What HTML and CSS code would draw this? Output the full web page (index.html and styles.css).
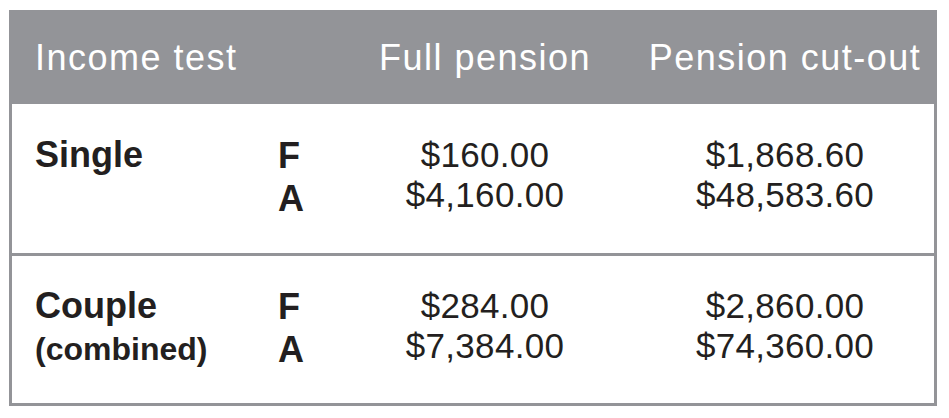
FILE: index.html
```html
<!DOCTYPE html>
<html>
<head>
<meta charset="utf-8">
<link rel="stylesheet" href="styles.css">
</head>
<body>
<div class="table">
  <div class="head">
    <div class="h-label">Income test</div>
    <div class="h-full">Full pension</div>
    <div class="h-cut">Pension cut-out</div>
  </div>
  <div class="row r1">
    <div class="label">Single</div>
    <div class="fa">F<br>A</div>
    <div class="val full">$160.00<br>$4,160.00</div>
    <div class="val cut">$1,868.60<br>$48,583.60</div>
  </div>
  <div class="row r2">
    <div class="label">Couple<br><span class="sub">(combined)</span></div>
    <div class="fa">F<br>A</div>
    <div class="val full">$284.00<br>$7,384.00</div>
    <div class="val cut">$2,860.00<br>$74,360.00</div>
  </div>
</div>
</body>
</html>
```
FILE: styles.css
```css
html, body {
  margin: 0;
  padding: 0;
  background: #ffffff;
}
body {
  padding: 10px 9px;
  font-family: "Liberation Sans", Arial, sans-serif;
  color: #231f20;
}
.table {
  width: 928px;
  box-sizing: border-box;
  border: 3px solid #939498;
  background: #ffffff;
}
.head, .row {
  display: grid;
  grid-template-columns: 258px 108px 214px 342px;
}
.head {
  background: #939498;
  color: #ffffff;
  height: 91px;
  box-sizing: border-box;
  padding-top: 25px;
  font-size: 36px;
  line-height: 40px;
  letter-spacing: 1.5px;
}
.h-label {
  grid-column: 1 / span 2;
  padding-left: 23px;
}
.h-full {
  text-align: center;
}
.h-cut {
  text-align: center;
  padding-left: 44px;
}
.row {
  box-sizing: border-box;
  align-items: start;
  font-size: 35px;
}
.r1 {
  height: 152px;
  padding-top: 30px;
  border-bottom: 3px solid #939498;
}
.r2 {
  height: 147px;
  padding-top: 29px;
}
.label {
  padding-left: 23px;
  font-weight: bold;
  font-size: 36px;
  line-height: 42px;
}
.label .sub {
  font-size: 32px;
  font-weight: bold;
}
.fa {
  padding-left: 8px;
  font-weight: bold;
  font-size: 36px;
  line-height: 43px;
}
.val {
  text-align: center;
  line-height: 40px;
  margin-top: 1px;
  letter-spacing: 0.3px;
}
.cut {
  padding-left: 44px;
}
```
